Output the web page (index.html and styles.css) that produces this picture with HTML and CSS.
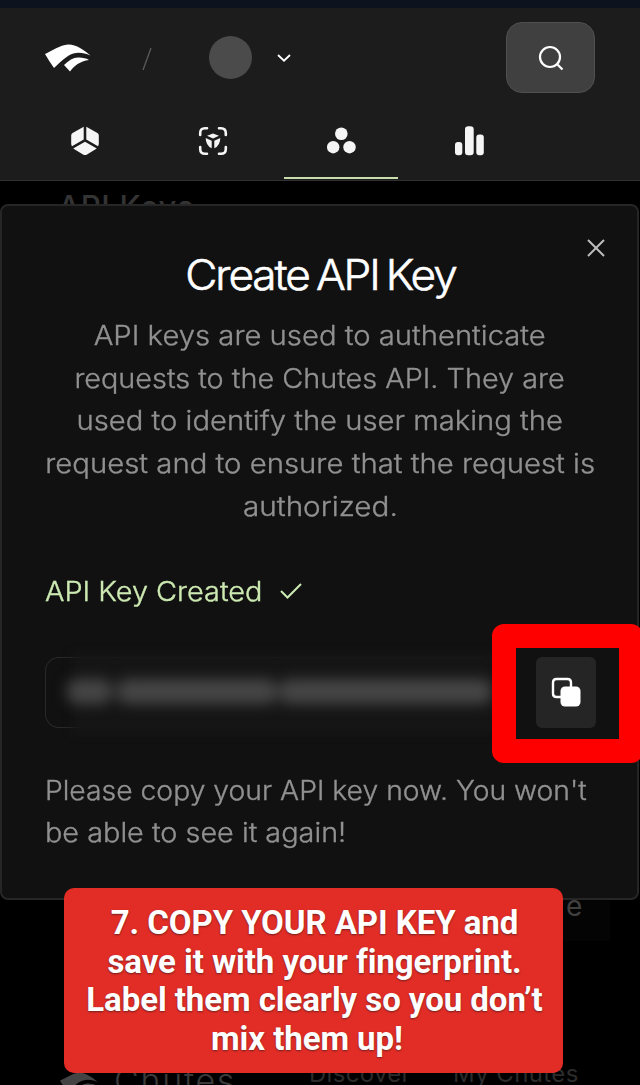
FILE: index.html
```html
<!DOCTYPE html>
<html lang="en">
<head>
<meta charset="utf-8">
<title>Create API Key</title>
<link rel="stylesheet" href="styles.css">
</head>
<body>
<div class="screen">
  <div class="strip"></div>
  <header class="header">
    <div class="topbar">
      <svg class="logo" viewBox="0 0 46 28" width="46" height="28"><path d="M0 10C7 7 15 1 23 .5 31 .2 39 6 45.500 11.500 37 8 30 7.500 23 12 18 15.500 13 20 9 24Q4 17 0 10Z" fill="#fff"/><path d="M19 21C24 16 29 13 34 13.500 38 14 41 14 44 16 35 17 29 22 25 27.500Z" fill="#fff"/></svg>
      <svg class="slash" viewBox="0 0 10 24" width="10" height="24"><path d="M1 23 9 1" stroke="#5b5b5b" stroke-width="1.300"/></svg>
      <span class="avatar"></span>
      <svg class="chevron" viewBox="0 0 14 8" width="14" height="8"><path d="M1 1 7 6.700 13 1" fill="none" stroke="#fff" stroke-width="1.800"/></svg>
      <button class="search" aria-label="Search"><svg viewBox="0 0 26 26" width="26" height="26"><circle cx="12" cy="12" r="10" /><path d="M19.200 19.200 24.500 24.500"/></svg></button>
    </div>
    <nav class="tabs">
      <a class="tab"><svg viewBox="0 0 30 30" width="30" height="30"><path d="M13.700.8V13.500L2 20.300Q1.200 19 1.200 17.500V9.500Q1.200 7.800 2.600 7ZM16.300.8V13.500L28 20.300Q28.800 19 28.800 17.500V9.500Q28.800 7.800 27.400 7ZM3.200 22.500 15 15.800 26.800 22.500 17 28.500Q15 29.700 13 28.500Z"/></svg></a>
      <a class="tab"><svg viewBox="0 0 30 30" width="30" height="30"><path class="line" d="M2.200 9V7Q2.200 2.200 7 2.200H9M21 2.200H23Q27.800 2.200 27.800 7V9M27.800 21V23Q27.800 27.800 23 27.800H21M9 27.800H7Q2.200 27.800 2.200 23V21"/><path d="M9 9.800 15 7.500 21 9.800 15 12.500ZM7.700 12 13.700 14.700V22.300Q7.700 19.500 7.700 12ZM22.300 12 16.300 14.700V22.300Q22.300 19.500 22.300 12Z"/></svg></a>
      <a class="tab active"><svg viewBox="0 0 30 30" width="30" height="30"><circle cx="15.300" cy="7.700" r="6.300"/><circle cx="7.200" cy="21.200" r="6.200"/><circle cx="23.500" cy="21.200" r="6.200"/></svg></a>
      <a class="tab"><svg viewBox="0 0 30 30" width="30" height="30"><rect x="1" y="16" width="7.300" height="13.200" rx="3"/><rect x="11" y=".3" width="8.700" height="28.900" rx="3.300"/><rect x="22.300" y="8.600" width="7.500" height="20.600" rx="3"/></svg></a>
    </nav>
  </header>
  <main class="page">
    <h2 class="page-title">API Keys</h2>
    <div class="page-button">e</div>
    <footer class="footer">
      <svg viewBox="0 0 46 28" width="38" height="24"><path d="M0 10C7 7 15 1 23 .5 31 .2 39 6 45.500 11.500 37 8 30 7.500 23 12 18 15.500 13 20 9 24Z"/><path d="M19 21C24 16 29 13 34 13.500 38 14 41 14 44 16 35 17 29 22 25 27.500Z"/></svg>
      <span class="brand">Chutes</span><span class="discover">Discover</span><span class="mine">My Chutes</span>
    </footer>
  </main>

  <section class="dialog" role="dialog">
    <svg class="close" viewBox="0 0 18 18" width="18" height="18"><path d="M1 1 17 17M17 1 1 17" stroke="#bdbdbd" stroke-width="2"/></svg>
    <h1 class="title">Create API Key</h1>
    <p class="description">
      <span class="d1">API keys are used to authenticate</span>
      <span class="d2">requests to the Chutes API. They are</span>
      <span class="d3">used to identify the user making the</span>
      <span class="d4">request and to ensure that the request is</span>
      <span class="d5">authorized.</span>
    </p>
    <div class="status"><span class="status-text">API Key Created</span><svg viewBox="0 0 22 16" width="22" height="16"><path d="M1 8 7.500 14.500 21 1" fill="none" stroke="#cdeab2" stroke-width="2"/></svg></div>
    <div class="key-row">
      <div class="key-field"><div class="haze"></div><div class="smudges"><i class="s1"></i><i class="s2"></i><i class="s3"></i></div></div>
      <button class="copy" aria-label="Copy"><svg viewBox="0 0 30 30" width="30" height="30"><path d="M10 20H5.500Q2 20 2 16.500V5.500Q2 2 5.500 2H16.500Q20 2 20 5.500V10" fill="none" stroke="#fff" stroke-width="2.400"/><rect x="9.500" y="9.500" width="20" height="20" rx="4.500" fill="#fff"/></svg></button>
    </div>
    <p class="note"><span class="n1">Please copy your API key now. You won't</span><span class="n2">be able to see it again!</span></p>
  </section>

  <div class="highlight"></div>
  <div class="callout">7. COPY YOUR API KEY and<br>save it with your fingerprint.<br>Label them clearly so you don’t<br><span class="callout-end">mix them up!</span></div>
</div>
</body>
</html>
```
FILE: styles.css
```css
* { box-sizing: border-box; }
body { margin: 0; background: #000; font-family: Inter, "Liberation Sans", sans-serif; }
h1, h2, p { margin: 0; font-weight: 400; }
button { border: 0; padding: 0; }
.screen { position: relative; display: flex; flex-direction: column; width: 640px; height: 1085px; overflow: hidden; }
.strip { height: 8px; background: #0d131e; }
.header { height: 173px; background: #1c1c1c; border-bottom: 1px solid #303030; }
.topbar { display: flex; align-items: center; height: 99px; padding: 0 45px 0 45px; }
.logo { flex: none; margin-top: 1px; }
.slash { margin-left: 51px; margin-top: 2px; }
.avatar { width: 43px; height: 43px; margin-left: 57px; border-radius: 50%; background: #4b4b4b; }
.chevron { margin-left: 25px; margin-top: 1px; }
.search { display: grid; place-items: center; width: 89px; height: 71px; margin-left: auto; border: 1px solid #505050; border-radius: 16px; background: #404040; }
.search svg { fill: none; stroke: #fff; stroke-width: 2.200; }
.tabs { display: flex; gap: 14px; height: 72px; padding-left: 28px; }
.tab { display: flex; justify-content: center; width: 114px; padding-top: 19px; border-bottom: 2px solid transparent; }
.tab svg { fill: #f5f5f5; }
.tab .line { fill: none; stroke: #f5f5f5; stroke-width: 2.600; stroke-linecap: round; }
.tab.active { border-color: #c8dcae; }

.page { display: flex; flex-direction: column; height: 904px; color: #303030; }
.page-title { height: 60px; padding: 9px 0 0 58px; font-size: 31px; line-height: 34px; font-weight: 500; letter-spacing: .700px; color: #343434; }
.page-button { width: 61px; height: 63px; margin: 637px 0 0 549px; padding: 11px 0 0 17px; font-size: 28px; line-height: 34px; background: #040404; color: #404040; }
.footer { display: flex; align-items: flex-start; height: 30px; margin-top: 114px; padding-left: 60px; line-height: 30px; color: #2c2c2c; white-space: nowrap; }
.footer svg { flex: none; margin-top: 17px; fill: #444; }
.brand { width: 194px; padding: 11px 0 0 16px; font-size: 34px; font-weight: 300; letter-spacing: 1.700px; color: #3a3a3a; }
.discover { width: 161px; padding: 4px 0 0 17px; font-size: 24px; letter-spacing: .300px; }
.mine { padding-top: 4px; font-size: 24px; letter-spacing: .400px; }

.dialog { position: absolute; top: 204px; left: 0; width: 639px; height: 696px; padding: 46px 42px 0 43px; background: #111; border: 2px solid #262626; border-radius: 8px; }
.close { position: absolute; top: 33px; right: 32px; }
.title { height: 44px; text-align: center; font-size: 42px; line-height: 44px; letter-spacing: -2px; word-spacing: -3px; color: #fff; white-space: nowrap; font-weight: 300; transform: translate(.500px, .500px) scaleX(1.052); -webkit-text-stroke: .600px #fff; }
.description { display: flex; flex-direction: column; align-items: center; margin-top: 19px; font-size: 27px; line-height: 42.700px; color: #919191; font-weight: 300; white-space: nowrap; -webkit-text-stroke: .350px #919191; }
/* Widened letterforms, per line */
.d1 { transform: scaleX(1.083); }
.d2 { transform: scaleX(1.068); }
.d3 { transform: scaleX(1.082); }
.d4 { transform: scaleX(1.086); }
.d5 { transform: scaleX(1.100); }
.status { display: flex; align-items: center; height: 43px; margin-top: 41px; font-size: 27px; color: #cdeab2; font-weight: 300; -webkit-text-stroke: .350px #cdeab2; }
.status-text { width: 235px; transform: scaleX(1.069); transform-origin: left; white-space: nowrap; }
.key-row { display: flex; height: 71px; margin-top: 44px; margin-right: -1px; justify-content: space-between; }
.key-field { position: relative; width: 448px; border: 1px solid #292929; border-right-color: transparent; border-radius: 14px; }
.haze { position: absolute; inset: -5px -4px -7px 26px; background: #151515; filter: blur(4px); }
.smudges { position: absolute; inset: 21px 0 20px 21px; display: flex; gap: 2px; filter: blur(7px); }
.smudges i { height: 25px; background: #464646; border-radius: 10px; }
.s1 { width: 45px; margin-right: 3px; }
.s2 { width: 160px; }
.s3 { flex: 1; }
.copy { display: grid; place-items: center; width: 60px; padding: 0 1px 0 0; background: #252525; border-radius: 6px; }
.note { display: flex; flex-direction: column; align-items: flex-start; margin-top: 42px; font-size: 27px; line-height: 42.700px; color: #919191; font-weight: 300; white-space: nowrap; -webkit-text-stroke: .350px #919191; }
.n1, .n2 { transform-origin: left; }
.n1 { transform: scaleX(1.048); }
.n2 { transform: scaleX(1.068); }

.highlight { position: absolute; left: 492px; top: 624px; width: 151px; height: 139px; border: 24px solid #fe0000; border-radius: 12px; }
.callout { position: absolute; left: 64px; top: 888px; width: 499px; height: 185px; padding: 16px 0 0 2px; border-radius: 10px; background: #e22d27; color: #fff; text-align: center; font: 700 33px/38.600px Roboto, sans-serif; letter-spacing: -.060px; text-shadow: 0 1px 2px #70201c; white-space: nowrap; }
.callout-end { padding-right: 15px; }
```
